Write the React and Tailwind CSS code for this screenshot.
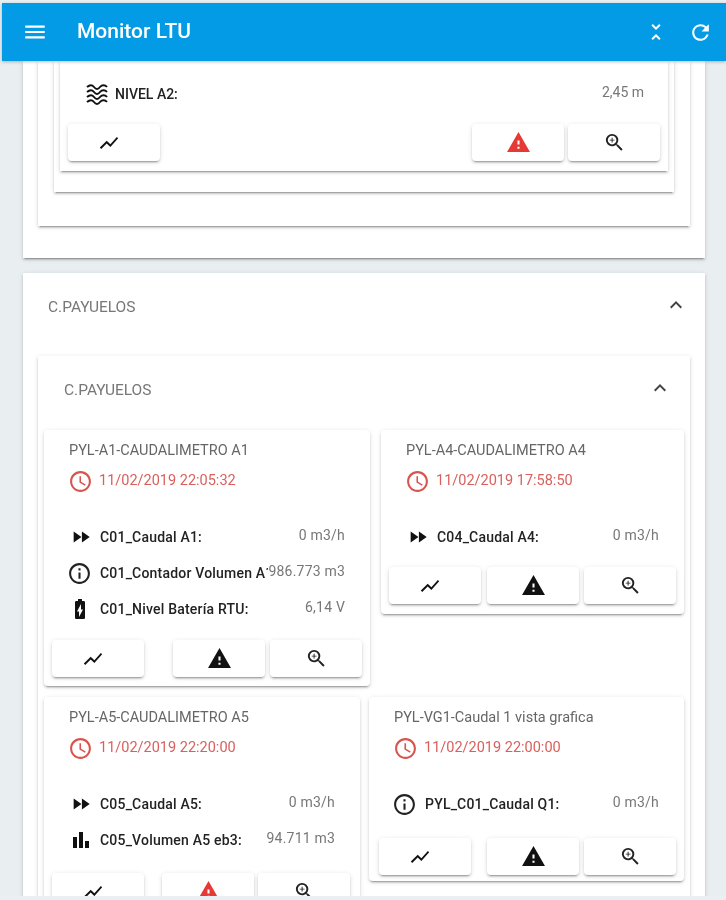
import React from "react";
import { MdMenu, MdUnfoldLess, MdRefresh, MdShowChart, MdWarning, MdZoomIn, MdAccessTime, MdFastForward, MdInfoOutline, MdBatteryChargingFull, MdBarChart, MdKeyboardArrowUp } from "react-icons/md";

const cardShadow = "shadow-[0_2px_2px_rgba(0,0,0,0.14),0_3px_1px_-2px_rgba(0,0,0,0.2),0_1px_5px_rgba(0,0,0,0.12)]";

function Waves() {
    return (
        <svg width="24" height="24" viewBox="0 0 24 24" fill="none" stroke="#111" strokeWidth="2">
            <path d="M2 4c3-2.500 5-2.500 7 0s4 2.500 6 0 5-2.500 7 0" />
            <path d="M2 9c3-2.500 5-2.500 7 0s4 2.500 6 0 5-2.500 7 0" />
            <path d="M2 14c3-2.500 5-2.500 7 0s4 2.500 6 0 5-2.500 7 0" />
            <path d="M2 19c3-2.500 5-2.500 7 0s4 2.500 6 0 5-2.500 7 0" />
        </svg>
    )
}

function ActionButton({ children }) {
    return (
        <div className={`w-[92px] h-[37px] bg-white rounded-sm flex items-center justify-center ${cardShadow}`}>
            { children }
        </div>
    )
}

function Actions({ alert, gap = "gap-[5px]", pad = "px-2", pt = "pt-[13px]" }) {
    return (
        <div className={`flex ${pad} ${pt}`}>
            <ActionButton><MdShowChart size={22} color="#111" className="mr-[10px]" /></ActionButton>
            <div className={`flex ml-auto ${gap}`}>
                <ActionButton><MdWarning size={25} color={ alert ? "#e53935" : "#111" } /></ActionButton>
                <ActionButton><MdZoomIn size={23} color="#222" /></ActionButton>
            </div>
        </div>
    )
}

function Row({ icon, label, value }) {
    return (
        <div className="flex items-center h-[36px] pl-[25px] pr-[25px]">
            <div className="w-[31px] shrink-0 flex items-center">{ icon }</div>
            <div className="flex-1 min-w-0 overflow-hidden whitespace-nowrap text-[14px] font-medium text-[#222] tracking-[0.2px]">{ label }</div>
            <div className="shrink-0 text-[14px] text-[#777] pb-[4px] tracking-[0.2px]">{ value }</div>
        </div>
    )
}

function Card({ width, title, date, rows, alert, height, gap, pad, pt }) {
    return (
        <div className={`${width} ${height} bg-white shrink-0 rounded-sm ${cardShadow}`}>
            <div className="pl-[25px] pt-[11px] h-[29px] text-[14.500px] leading-[20px] text-[#666] whitespace-nowrap">{ title }</div>
            <div className="flex items-center pl-[25px] h-[24px] mt-[10px] text-[14.500px] text-[#d9605c]">
                <MdAccessTime size={25} color="#d9534f" className="ml-[-1px] mr-[6px]" />
                { date }
            </div>
            <div className="pt-[26px]">
                { rows.map(r => <Row key={ r.label } { ...r } />) }
            </div>
            <Actions alert={ alert } gap={ gap } pad={ pad } pt={ pt } />
        </div>
    )
}

function SectionHead({ children, className }) {
    return (
        <div className={`flex items-center justify-between text-[15.500px] text-[#777] ${className}`}>
            <span>{ children }</span>
            <MdKeyboardArrowUp size={24} color="#444" className="mt-[-6px]" />
        </div>
    )
}

const flow = <MdFastForward size={22} color="#111" className="ml-[1px]" />;
const info = <MdInfoOutline size={25} color="#222" className="ml-[-2px]" />;

export default function App() {
    return (
        <div className="w-[726px] h-[900px] overflow-hidden flex flex-col bg-[#e9eef0] font-['Roboto',sans-serif] blur-[0.4px]">
            <div className="h-[3px] shrink-0" />
            <header className="h-[58px] shrink-0 ml-[2px] z-10 bg-[#039be5] text-white flex items-center shadow-[0_1px_3px_rgba(0,0,0,0.25)]">
                <MdMenu size={26} className="ml-[20px]" />
                <div className="ml-[29px] text-[21px] font-medium">Monitor LTU</div>
                <MdUnfoldLess size={24} className="ml-auto" />
                <MdRefresh size={25} className="ml-[20px] mr-[13px]" />
            </header>

            <main className="flex-1 min-h-0 overflow-hidden pl-[23px] pr-[21px]">
                <div className={`bg-white h-[197px] px-[15px] ${cardShadow}`}>
                    <div className={`bg-white h-[165px] px-[16px] ${cardShadow}`}>
                        <div className={`bg-white h-[131px] px-[6px] ${cardShadow}`}>
                            <div className={`bg-white h-[110px] ${cardShadow}`}>
                                <div className="flex items-center h-[63px] pt-[4px] pl-[25px] pr-[24px]">
                                    <Waves />
                                    <div className="ml-[6px] flex-1 text-[14px] font-medium text-[#222]">NIVEL A2:</div>
                                    <div className="text-[14px] text-[#777] pb-[4px]">2,45 m</div>
                                </div>
                                <Actions alert pad="px-2" gap="gap-[4px]" pt="pt-0" />
                            </div>
                        </div>
                    </div>
                </div>

                <div className={`bg-white mt-[15px] h-[700px] px-[15px] ${cardShadow}`}>
                    <SectionHead className="h-[83px] pb-[14px] pl-[10px] pr-[2px]">C.PAYUELOS</SectionHead>
                    <div className={`bg-white h-[600px] px-[6px] ${cardShadow}`}>
                        <SectionHead className="h-[74px] pb-[4px] pl-[20px] pr-[12px]">C.PAYUELOS</SectionHead>
                        <div className="flex justify-between items-start">
                            <Card
                                width="w-[326px]" height="h-[256px]"
                                title="PYL-A1-CAUDALIMETRO A1" date="11/02/2019 22:05:32"
                                rows={[
                                    { icon: flow, label: "C01_Caudal A1:", value: "0 m3/h" },
                                    { icon: info, label: "C01_Contador Volumen A1:", value: "986.773 m3" },
                                    { icon: <MdBatteryChargingFull size={24} color="#111" className="ml-[-1px]" />, label: "C01_Nivel Batería RTU:", value: "6,14 V" },
                                ]}
                            />
                            <Card
                                width="w-[303px]" height="h-[184px]"
                                title="PYL-A4-CAUDALIMETRO A4" date="11/02/2019 17:58:50" pt="pt-[12px]"
                                rows={[{ icon: flow, label: "C04_Caudal A4:", value: "0 m3/h" }]}
                            />
                        </div>
                        <div className="flex justify-between items-start mt-[11px]">
                            <Card
                                width="w-[316px]" height="h-[256px]" alert pad="pl-2 pr-[10px]" gap="gap-[4px]" pt="pt-[15px]"
                                title="PYL-A5-CAUDALIMETRO A5" date="11/02/2019 22:20:00"
                                rows={[
                                    { icon: flow, label: "C05_Caudal A5:", value: "0 m3/h" },
                                    { icon: <MdBarChart size={24} color="#111" />, label: "C05_Volumen A5 eb3:", value: "94.711 m3" },
                                ]}
                            />
                            <Card
                                width="w-[315px]" height="h-[184px]" pad="pl-[10px] pr-2" pt="pt-[16px]"
                                title="PYL-VG1-Caudal 1 vista grafica" date="11/02/2019 22:00:00"
                                rows={[{ icon: info, label: "PYL_C01_Caudal Q1:", value: "0 m3/h" }]}
                            />
                        </div>
                    </div>
                </div>
            </main>
            <div className="h-[4px] shrink-0 z-10 bg-[#eceff1]" />
        </div>
    )
}
